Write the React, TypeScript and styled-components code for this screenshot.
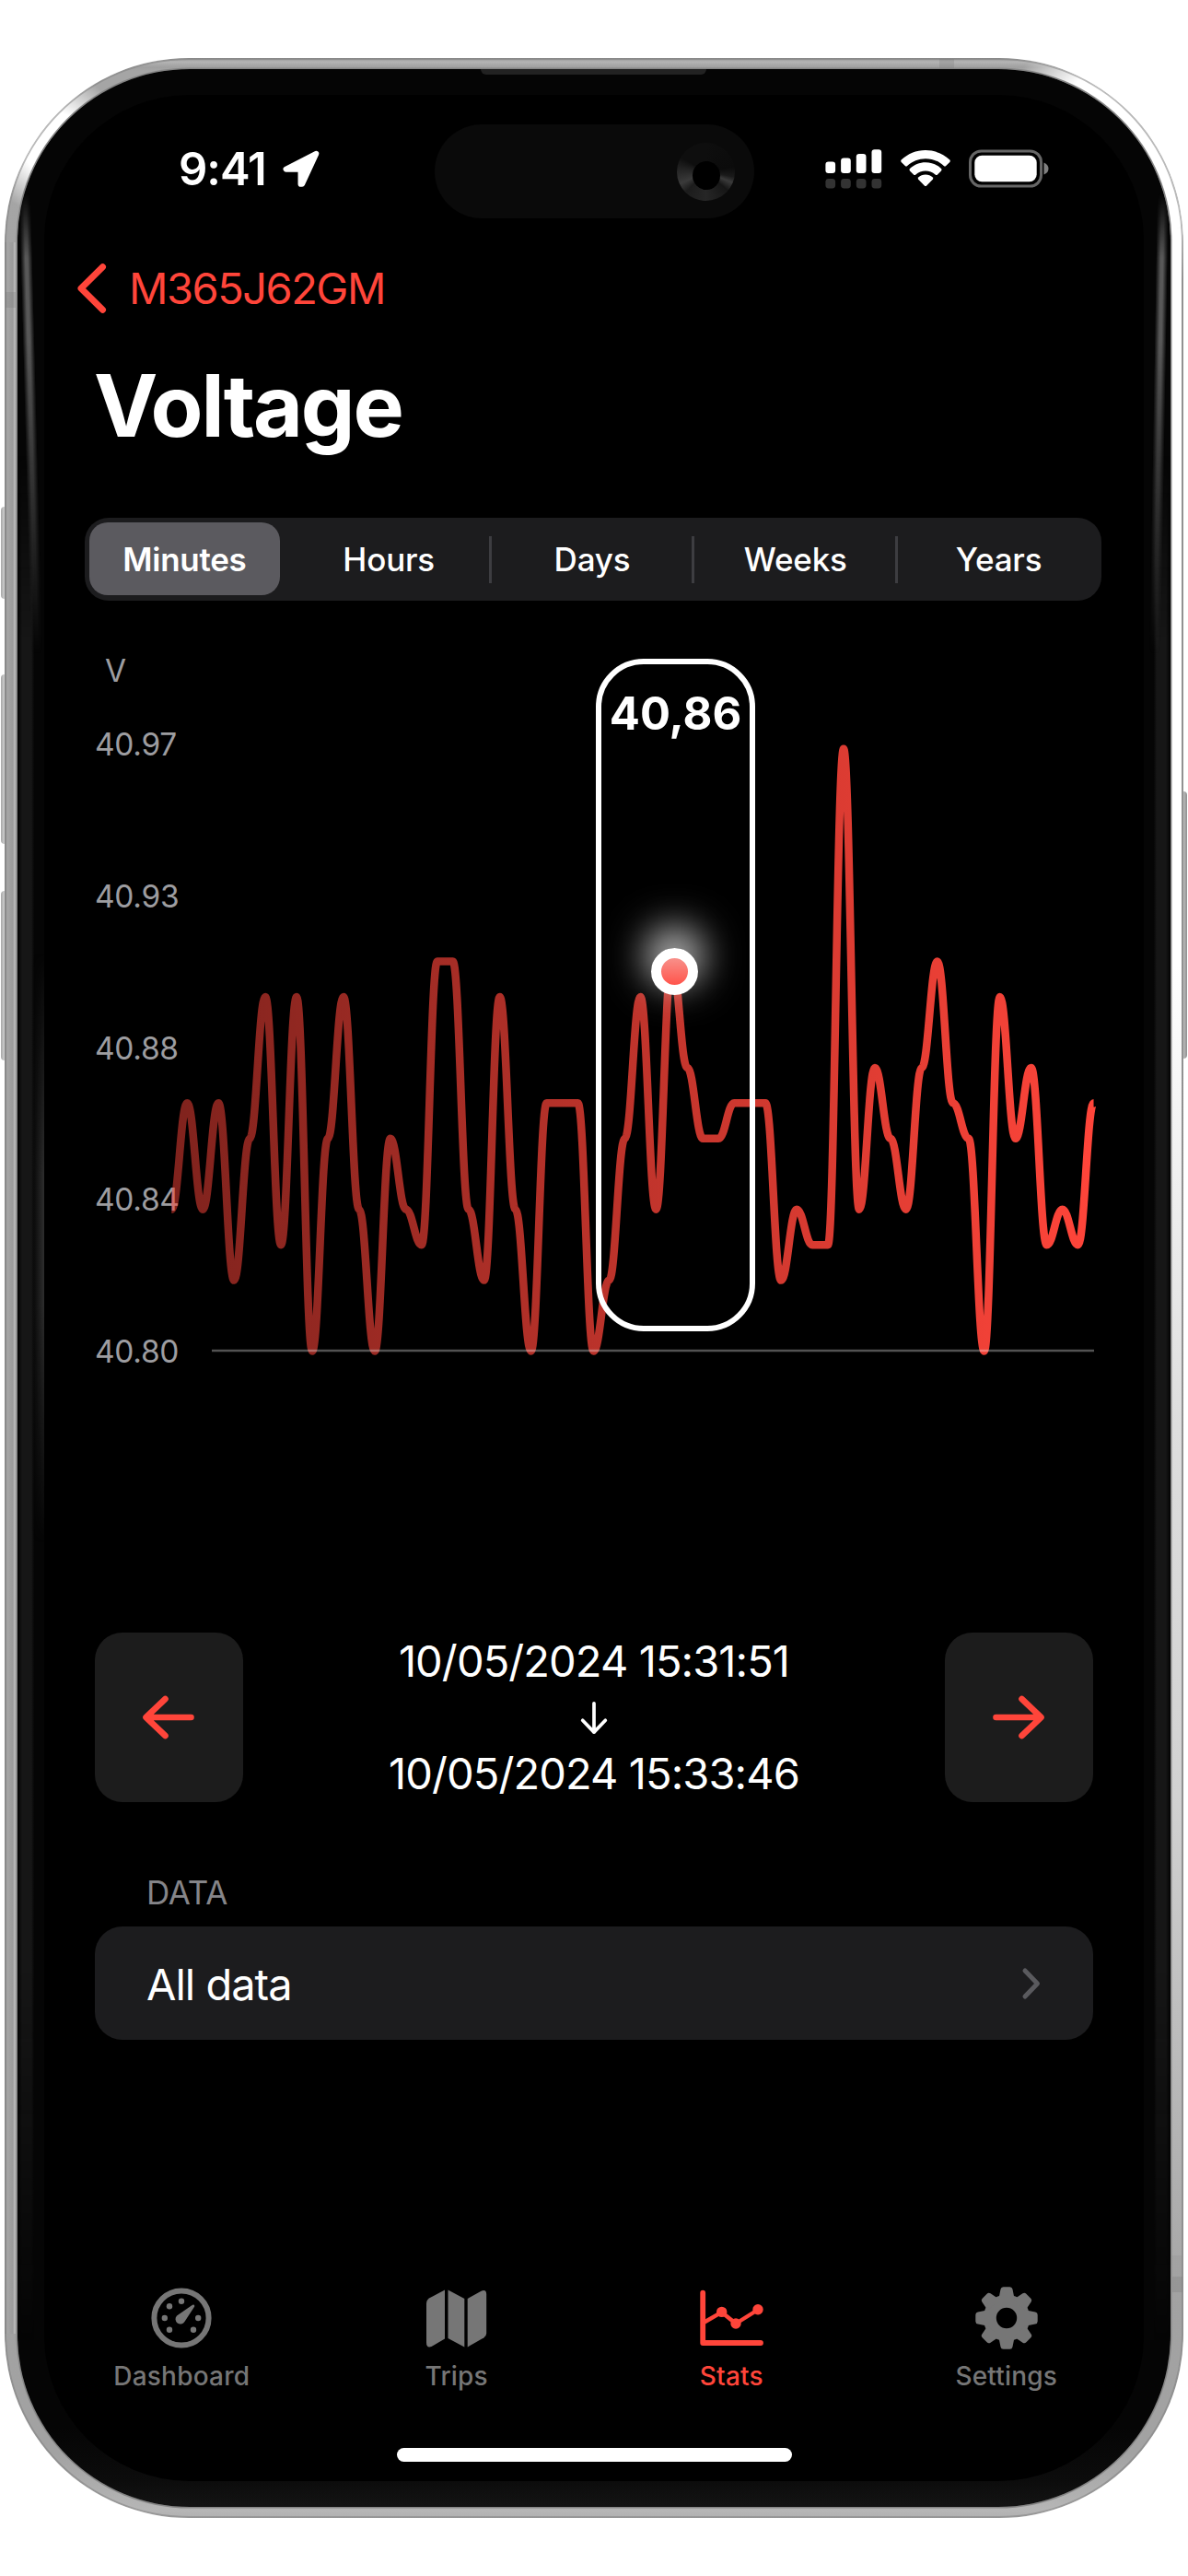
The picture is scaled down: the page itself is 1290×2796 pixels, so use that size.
import React from "react";
import styled, { createGlobalStyle, css } from "styled-components";

const RED = "#ff453a";

const GlobalStyle = createGlobalStyle`
  * { box-sizing: border-box; }
  body {
    margin: 0;
    background: #fff;
    font-family: Inter, "Liberation Sans", sans-serif;
    -webkit-font-smoothing: antialiased;
  }
  button { font: inherit; border: 0; padding: 0; background: none; color: inherit; }
`;

const Page = styled.main`
  width: 1290px;
  height: 2796px;
  padding: 63px 5px 0;
  background: #fff;
  overflow: hidden;
`;

const Frame = styled.div`
  position: relative;
  width: 1280px;
  height: 2670px;
  padding: 12px 14px;
  border-radius: 200px;
  box-shadow: inset 0 0 0 2px rgba(130, 130, 130, 0.55);
  background:
    linear-gradient(180deg, #fff 0, #fff 800px, #dedede 1300px, #d2d2d2 1700px, #a9a9a9 2200px) right 2px top 185px / 12px 2200px no-repeat,
    linear-gradient(90deg, #8c8c8c 0, #a6a6a6 3px, #9b9b9b 9px, #bebebe 11px, #8a8a8a 14px) left top 200px / 14px 2270px no-repeat,
    radial-gradient(circle at 52px 92px, #fff 0, #fff 34px, transparent 78px),
    radial-gradient(circle at 1226px 100px, #fff 0, #fff 96px, transparent 150px),
    linear-gradient(180deg, #8f8f8f 0, #b4b4b4 4px, #a0a0a0 10px, #a5a5a5 14px, #a2a2a2 2600px, #b6b6b6 2662px, #b0b0b0 2670px);
`;

const SideButton = styled.span<{ $side: "left" | "right"; $top: number; $height: number }>`
  position: absolute;
  top: ${(p) => p.$top}px;
  height: ${(p) => p.$height}px;
  width: 4px;
  ${(p) =>
    p.$side === "left"
      ? css`left: -4px; border-radius: 4px 0 0 4px; background: linear-gradient(90deg, #a8a8a8, #cfd0d0);`
      : css`right: -4px; border-radius: 0 4px 4px 0; background: linear-gradient(90deg, #bdbdbd, #8f8f8f);`}
`;

const AntennaBand = styled.span<{ $left: number; $top: number; $wide?: boolean }>`
  position: absolute;
  left: ${(p) => p.$left}px;
  top: ${(p) => p.$top}px;
  width: ${(p) => (p.$wide ? 16 : 11)}px;
  height: ${(p) => (p.$wide ? 10 : 17)}px;
  background: rgba(110, 110, 110, 0.22);
`;

const Bezel = styled.div`
  position: relative;
  height: 100%;
  padding: 28px 29px;
  border-radius: 187px;
  overflow: hidden;
  background: linear-gradient(180deg, #050505 0, #050505 2560px, #0c0c0c 2618px, #131313 2644px);
  box-shadow: 0 0 0 1.5px #858585;
`;

const EdgeShade = styled.i<{ $side: "left" | "right" }>`
  position: absolute;
  top: 420px;
  bottom: 180px;
  width: 18px;
  ${(p) => p.$side}: 0;
  background: linear-gradient(${(p) => (p.$side === "left" ? 90 : 270)}deg, #020202, #161616 5px, #161616 15px, #060606);
  mask: linear-gradient(transparent, #000 200px, #000 80%, transparent);
`;

const Streak = styled.i<{ $side: "left" | "right"; $lower?: boolean }>`
  position: absolute;
  ${(p) =>
    p.$lower
      ? css`
          top: 960px;
          height: 640px;
          width: 13px;
          left: 16px;
          background: linear-gradient(90deg, transparent, #2e2e2e);
          mask: linear-gradient(transparent, #000 240px, #000 380px, transparent);
        `
      : css`
          top: 135px;
          height: 500px;
          width: 13px;
          ${p.$side}: ${p.$side === "left" ? 8 : 6}px;
          background: linear-gradient(90deg, transparent, #585858 40%, #585858 60%, transparent);
          mask: linear-gradient(transparent, #000 70px, #000 160px, transparent);
          transform: rotate(${p.$side === "left" ? -1.5 : 1}deg);
        `}
`;

const Earpiece = styled.span`
  position: absolute;
  top: 0;
  left: 503px;
  width: 245px;
  height: 6px;
  border-radius: 0 0 6px 6px;
  background: #222;
`;

const Screen = styled.div`
  position: relative;
  display: flex;
  flex-direction: column;
  height: 2590px;
  border-radius: 158px;
  background: #000;
  color: #fff;
`;

const StatusBar = styled.header`
  display: flex;
  align-items: center;
  justify-content: space-between;
  height: 160px;
  padding: 0 103px 0 146px;
`;

const Clock = styled.div`
  display: flex;
  align-items: center;
  gap: 17px;
  font-size: 49px;
  font-weight: 600;
  letter-spacing: -1px;
`;

const StatusIcons = styled.div`
  display: flex;
  align-items: center;
  gap: 20px;
`;

const Island = styled.div`
  position: absolute;
  top: 32px;
  left: 424px;
  display: flex;
  align-items: center;
  justify-content: flex-end;
  width: 347px;
  height: 102px;
  padding-right: 21px;
  border-radius: 51px;
  background: #0a0a0a;
`;

const Lens = styled.div`
  display: grid;
  place-items: center;
  width: 63px;
  height: 63px;
  padding-top: 8px;
  border-radius: 50%;
  background: conic-gradient(#0e0e0e 0deg, #0b0b0b 80deg, #1a1a1a 100deg, #3a3a3a 112deg, #161616 130deg, #262626 180deg, #1c1c1c 225deg, #3a3a3a 245deg, #242424 275deg, #0e0e0e 300deg, #0e0e0e 360deg);

  &::after {
    content: "";
    width: 30px;
    height: 31px;
    border-radius: 50%;
    background: #000;
  }
`;

const BackLink = styled.button`
  display: flex;
  align-items: center;
  gap: 23px;
  height: 99px;
  padding-left: 35px;
  color: ${RED};
  font-size: 47px;
  letter-spacing: -1.5px;
`;

const Title = styled.h1`
  margin: 0;
  padding-left: 54px;
  font-size: 93px;
  line-height: 157px;
  font-weight: 700;
  letter-spacing: -2.2px;
`;

const Segmented = styled.nav`
  display: grid;
  grid-template-columns: repeat(5, 1fr);
  height: 90px;
  margin: 43px 46px 0 44px;
  border-radius: 26px;
  background: #1c1c1e;
`;

const Segment = styled.button<{ $active?: boolean; $divider?: boolean }>`
  display: flex;
  align-items: center;
  justify-content: center;
  padding-right: 2px;
  font-size: 35px;
  font-weight: 500;
  letter-spacing: -0.2px;
  ${(p) =>
    p.$active &&
    css`
      margin: 5px 9px 6px 5px;
      padding-right: 0;
      border-radius: 20px;
      background: #5b5a5f;
      font-weight: 600;
      letter-spacing: -0.3px;
    `}
  ${(p) =>
    p.$divider &&
    css`
      background: linear-gradient(#3d3d41, #3d3d41) right center / 3px 51px no-repeat;
    `}
`;

const Chart = styled.section`
  position: relative;
  display: grid;
  grid-template-columns: 82px 1004px;
  height: 1120px;
  margin: 0 52px 0 56px;
`;

const Axis = styled.div`
  margin-left: -1px;
  padding-top: 64px;
  color: #9d9da0;
  font-size: 33.5px;
  letter-spacing: -0.3px;
  white-space: nowrap;
`;

const Unit = styled.div`
  padding-left: 11px;
  line-height: 24px;
`;

const Ticks = styled.ul`
  display: flex;
  flex-direction: column;
  justify-content: space-between;
  height: 699px;
  margin: 48px 0 0;
  padding: 0;
  list-style: none;
  line-height: 40px;
`;

const Plot = styled.svg`
  display: block;
  margin-top: 36px;
`;

const Callout = styled.div`
  position: absolute;
  top: 63px;
  left: 543px;
  display: flex;
  justify-content: center;
  width: 173px;
  height: 730px;
  padding-top: 24px;
  border: 6px solid #fff;
  border-radius: 52px;
  font-size: 49px;
  font-weight: 700;
  line-height: 59px;
`;

const Marker = styled.i`
  position: absolute;
  top: 377px;
  left: 603px;
  width: 51px;
  height: 51px;
  border: 11px solid #fff;
  border-radius: 50%;
  background: linear-gradient(#f8908a, #ff544b);
  box-shadow: 0 -17px 42px 6px rgba(255, 255, 255, 0.76);
`;

const Period = styled.section`
  display: flex;
  align-items: stretch;
  justify-content: space-between;
  height: 184px;
  padding: 0 55px;
`;

const StepButton = styled.button`
  display: grid;
  place-items: center;
  width: 161px;
  padding-right: 1px;
  border-radius: 30px;
  background: #1c1c1c;
  color: ${RED};
`;

const Range = styled.div`
  display: flex;
  flex-direction: column;
  align-items: center;
  justify-content: center;
  font-size: 47px;
  line-height: 62px;
  letter-spacing: -0.9px;

  svg { margin: 11px 0; }
`;

const GroupLabel = styled.h2`
  margin: 67px 0 6px;
  padding-left: 111px;
  color: #858589;
  font-size: 35px;
  font-weight: 400;
  line-height: 62px;
  letter-spacing: -0.2px;
`;

const ListRow = styled.button`
  display: flex;
  align-items: center;
  justify-content: space-between;
  height: 123px;
  margin: 0 55px;
  padding: 1px 56px 0 56px;
  border-radius: 30px;
  background: #1c1c1e;
  font-size: 47px;
  letter-spacing: -1px;
`;

const TabBar = styled.nav`
  display: grid;
  grid-template-columns: repeat(4, 1fr);
  margin-top: auto;
`;

const Tab = styled.button<{ $active?: boolean }>`
  display: flex;
  flex-direction: column;
  align-items: center;
  color: ${(p) => (p.$active ? RED : "#767676")};
  font-size: 28px;
  font-weight: 550;
  line-height: 34px;
  letter-spacing: 0.2px;

  svg { margin-bottom: 12px; }
`;

const HomeIndicator = styled.div`
  width: 429px;
  height: 15px;
  margin: 61px auto 21px;
  border-radius: 8px;
  background: #fff;
`;

const LocationIcon = () => (
  <svg width="42" height="41" viewBox="0 0 40 40">
    <path
      d="M35.800 3.800 4 20.200 H19.600 V35.800 L21 35.800Z"
      fill="#fff"
      stroke="#fff"
      strokeWidth="6"
      strokeLinejoin="round"
    />
  </svg>
);

const BARS = [12.5, 16.5, 21, 25.7];

const SignalIcon = () => (
  <svg width="62" height="44" viewBox="0 0 62 44">
    {BARS.map((h, i) => (
      <g key={h}>
        <rect x={0.4 + i * 16.7} y={27 - h} width="10.7" height={h} rx="3.2" fill="#fff" />
        <rect x={0.4 + i * 16.7} y="33" width="10.7" height="10.5" rx="3.4" fill="#333" />
      </g>
    ))}
  </svg>
);

const WifiIcon = () => (
  <svg width="54" height="40" viewBox="0 0 54 40">
    <path d="M27 0 C37 0 46.500 4 53.300 10.600 Q54.300 11.800 53.300 13 L49.200 17 Q48 18 46.800 17 C41.500 12 34.500 9.200 27 9.200 S12.500 12 7.200 17 Q6 18 4.800 17 L.7 13 Q-.3 11.800 .7 10.600 C7.500 4 17 0 27 0Z" fill="#fff" />
    <path d="M27 13.300 C33.500 13.300 39.500 15.800 44 20 Q45 21.200 44 22.400 L40 26.400 Q38.800 27.400 37.600 26.400 C34.700 23.800 31 22.400 27 22.400 S19.300 23.800 16.400 26.400 Q15.200 27.400 14 26.400 L10 22.400 Q9 21.200 10 20 C14.500 15.800 20.500 13.300 27 13.300Z" fill="#fff" />
    <path d="M27 26.600 C30 26.600 32.700 27.700 34.800 29.500 Q35.800 30.700 34.800 31.800 L28.200 38.600 Q27 39.600 25.800 38.600 L19.200 31.800 Q18.200 30.700 19.200 29.500 C21.300 27.700 24 26.600 27 26.600Z" fill="#fff" />
  </svg>
);

const BatteryIcon = () => (
  <svg width="87" height="42" viewBox="0 0 87 42">
    <rect x="1.500" y="1.900" width="77" height="38.200" rx="12" fill="none" stroke="#666" strokeWidth="3" />
    <rect x="6.300" y="6.700" width="67.400" height="28.600" rx="8" fill="#fff" />
    <path d="M81.500 14.500 Q86.500 16.500 86.500 21 Q86.500 25.500 81.500 27.500Z" fill="#808080" />
  </svg>
);

const BackIcon = () => (
  <svg width="34" height="54" viewBox="0 0 34 54" fill="none">
    <path d="M28.500 3.800 5 27 28.500 50.200" stroke={RED} strokeWidth="7" strokeLinecap="round" strokeLinejoin="round" />
  </svg>
);

const ArrowIcon = ({ flip }: { flip?: boolean }) => (
  <svg width="58" height="50" viewBox="0 0 58 50" fill="none">
    <path
      d={flip ? "M4.500 25H53M32.500 5 53.500 25 32.500 45" : "M53.500 25H5M25.500 5 4.500 25 25.500 45"}
      stroke={RED}
      strokeWidth="6.600"
      strokeLinecap="round"
      strokeLinejoin="round"
    />
  </svg>
);

const DownIcon = () => (
  <svg width="34" height="40" viewBox="0 0 34 40" fill="none">
    <path d="M17 4V37M4 23.500 17 37 30 23.500" stroke="#fff" strokeWidth="3.900" strokeLinecap="round" strokeLinejoin="round" />
  </svg>
);

const ChevronIcon = () => (
  <svg width="22" height="36" viewBox="0 0 22 36" fill="none">
    <path d="M4 4 17.500 18 4 32" stroke="#5a5a5e" strokeWidth="5" strokeLinecap="round" strokeLinejoin="round" />
  </svg>
);

const GaugeIcon = () => (
  <svg width="68" height="68" viewBox="-34 -34 68 68" fill="currentColor">
    <circle r="29.600" fill="none" stroke="currentColor" strokeWidth="6" />
    {[[0, -18.2], [-13, -12.8], [-18.2, 0], [18.2, 0], [-13, 12.8], [13, 12.8]].map(([x, y]) => (
      <circle key={`${x},${y}`} cx={x} cy={y} r="3.200" />
    ))}
    <path d="M12 -14.200 Q14.600 -15.200 14.200 -12.500 L3.600 3.800 A5.400 5.400 0 1 1 -5 -2.600Z" />
  </svg>
);

const MapIcon = () => (
  <svg width="68" height="68" viewBox="-34 -34 68 68" fill="currentColor">
    <path d="M-33 -15.500 Q-33 -19.500 -30 -21.500 L-13 -30.500 V22.500 L-27.500 31 Q-33 33 -33 26.500Z" />
    <path d="M-9.500 -30.500 8.300 -21 V31.500 L-9.500 22Z" />
    <path d="M11.700 -21 26.500 -29.300 Q32.200 -31.500 32.200 -25.500 V16.500 Q32.200 19.500 29.500 21.300 L11.700 31.500Z" />
  </svg>
);

const StatsIcon = () => (
  <svg width="70" height="68" viewBox="-35 -34 70 68" fill="currentColor" stroke="currentColor" strokeLinecap="round" strokeLinejoin="round">
    <path d="M-30.800 -27.300V27H32" fill="none" strokeWidth="5.800" />
    <path d="M-30 5 -10.300 -6.300 5 6 29 -9" fill="none" strokeWidth="4.400" />
    <g stroke="none">
      <circle cx="-10.300" cy="-6.600" r="5.700" />
      <circle cx="5" cy="6" r="5.700" />
      <circle cx="29" cy="-9.200" r="5.700" />
    </g>
  </svg>
);

const GearIcon = () => (
  <svg width="68" height="68" viewBox="-34 -34 68 68" fill="currentColor">
    <circle r="18.200" fill="none" stroke="currentColor" strokeWidth="14" />
    {[0, 45, 90, 135, 180, 225, 270, 315].map((a) => (
      <path
        key={a}
        transform={`rotate(${a})`}
        d="M-9.500 -20 L-8 -23.800 L-6.500 -31.200 Q-6 -33.700 -3.500 -33.700 H3.500 Q6 -33.700 6.500 -31.200 L8 -23.800 L9.500 -20Z"
      />
    ))}
  </svg>
);

const BASE_Y = 778.5;
const LEVEL = 38.45;
const STEP = 16.97;

const SAMPLES = [
  4, 7, 4, 7, 2, 6, 10, 3, 10, 0, 6, 10, 4, 0, 6, 4, 3, 11, 11, 4,
  2, 10, 4, 0, 7, 7, 7, 0, 2, 6, 10, 4, 11, 8, 6, 6, 7, 7, 7, 2,
  4, 3, 3, 17, 4, 8, 6, 4, 8, 11, 7, 6, 0, 10, 6, 8, 3, 4, 3, 7,
];

const linePath = SAMPLES.map((v, i) => {
  const x = 0.3 + i * STEP;
  const y = BASE_Y - v * LEVEL;
  if (i === 0) return `M${x} ${y}`;
  const px = x - STEP;
  const py = BASE_Y - SAMPLES[i - 1] * LEVEL;
  return `C${px + STEP * 0.42} ${py} ${x - STEP * 0.42} ${y} ${x} ${y}`;
}).join(" ");

const SEGMENTS = ["Minutes", "Hours", "Days", "Weeks", "Years"];
const TICKS = ["40.97", "40.93", "40.88", "40.84", "40.80"];
const TABS = [
  { label: "Dashboard", icon: <GaugeIcon /> },
  { label: "Trips", icon: <MapIcon /> },
  { label: "Stats", icon: <StatsIcon />, active: true },
  { label: "Settings", icon: <GearIcon /> },
];

export default function App() {
  return (
    <>
      <GlobalStyle />
      <Page>
        <Frame>
          <SideButton $side="left" $top={487} $height={100} />
          <SideButton $side="left" $top={669} $height={184} />
          <SideButton $side="left" $top={904} $height={184} />
          <SideButton $side="right" $top={796} $height={290} />
          <AntennaBand $left={1} $top={254} />
          <AntennaBand $left={1015} $top={1} $wide />
          <AntennaBand $left={1268} $top={2408} />
          <Bezel>
            <Earpiece />
            <EdgeShade $side="left" />
            <EdgeShade $side="right" />
            <Streak $side="left" />
            <Streak $side="right" />
            <Streak $side="left" $lower />
            <Screen>
              <StatusBar>
                <Clock>
                  9:41
                  <LocationIcon />
                </Clock>
                <StatusIcons>
                  <SignalIcon />
                  <WifiIcon />
                  <BatteryIcon />
                </StatusIcons>
              </StatusBar>
              <Island>
                <Lens />
              </Island>
              <BackLink>
                <BackIcon />
                M365J62GM
              </BackLink>
              <Title>Voltage</Title>
              <Segmented>
                {SEGMENTS.map((s, i) => (
                  <Segment key={s} $active={i === 0} $divider={i > 0 && i < 4}>
                    {s}
                  </Segment>
                ))}
              </Segmented>
              <Chart>
                <Axis>
                  <Unit>V</Unit>
                  <Ticks>
                    {TICKS.map((t) => (
                      <li key={t}>{t}</li>
                    ))}
                  </Ticks>
                </Axis>
                <Plot width="1004" height="800" viewBox="0 0 1004 800">
                  <defs>
                    <linearGradient id="trace" gradientUnits="userSpaceOnUse" x1="0" y1="0" x2="1004" y2="0">
                      <stop offset="0" stopColor={RED} stopOpacity="0.5" />
                      <stop offset="1" stopColor={RED} stopOpacity="1" />
                    </linearGradient>
                  </defs>
                  <path d={linePath} fill="none" stroke="url(#trace)" strokeWidth="8.500" strokeLinejoin="round" />
                  <path d="M44 778H1002" stroke="#fff" strokeOpacity="0.32" strokeWidth="2.500" />
                </Plot>
                <Callout>40,86</Callout>
                <Marker />
              </Chart>
              <Period>
                <StepButton>
                  <ArrowIcon />
                </StepButton>
                <Range>
                  <span>10/05/2024 15:31:51</span>
                  <DownIcon />
                  <span>10/05/2024 15:33:46</span>
                </Range>
                <StepButton>
                  <ArrowIcon flip />
                </StepButton>
              </Period>
              <GroupLabel>DATA</GroupLabel>
              <ListRow>
                All data
                <ChevronIcon />
              </ListRow>
              <TabBar>
                {TABS.map((t) => (
                  <Tab key={t.label} $active={t.active}>
                    {t.icon}
                    {t.label}
                  </Tab>
                ))}
              </TabBar>
              <HomeIndicator />
            </Screen>
          </Bezel>
        </Frame>
      </Page>
    </>
  );
}
